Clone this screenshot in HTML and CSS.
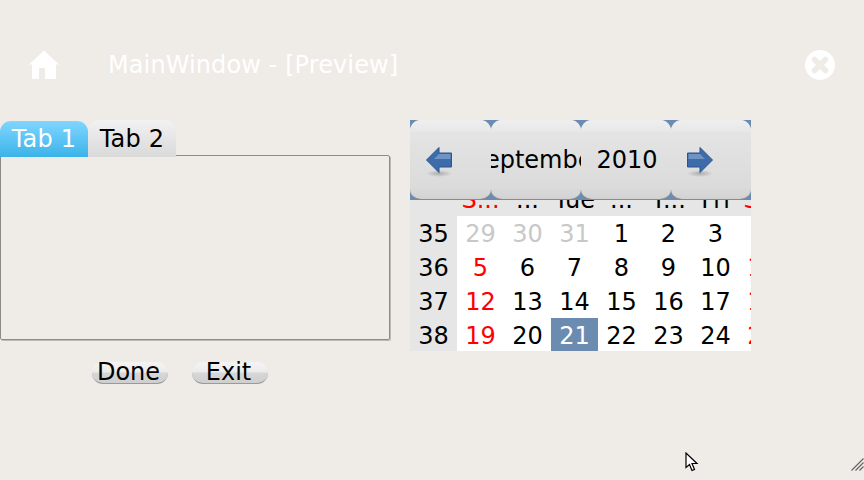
FILE: index.html
```html
<!DOCTYPE html>
<html lang="en">
<head>
  <meta charset="UTF-8" />
  <title>MainWindow - [Preview]</title>
  <link rel="stylesheet" href="styles.css">
</head>
<body>

<!-- TITLE BAR -->
<header class="titlebar">
  <svg class="home-icon" width="32" height="30" viewBox="0 0 32 30">
    <path d="M16 0.500 L31 14.500 H28 V29 H17 V18 H11 V29 H4 V14.500 H1 Z" fill="#fff"/>
  </svg>
  <div class="title">MainWindow - [Preview]</div>
  <svg class="close-icon" width="30" height="30" viewBox="0 0 30 30">
    <circle cx="15" cy="15" r="15" fill="#fff"/>
    <path d="M9.500 9.500 L20.500 20.500 M20.500 9.500 L9.500 20.500" stroke="#efebe7" stroke-width="5.500" stroke-linecap="round"/>
  </svg>
</header>

<main class="content">
  <!-- TABS -->
  <section class="left-panel">
    <div class="tabs">
      <div class="tab tab-active">Tab 1</div>
      <div class="tab">Tab 2</div>
    </div>
    <div class="tab-pane"></div>
    <div class="actions">
      <button class="pill">Done</button>
      <button class="pill">Exit</button>
    </div>
  </section>

  <!-- CALENDAR -->
  <section class="calendar">
    <div class="cal-nav">
      <div class="nav-btn nav-prev">
        <svg width="28" height="32" viewBox="0 0 28 32">
          <defs>
            <radialGradient id="arrow-shadow">
              <stop offset="0" stop-color="#000" stop-opacity="0.22"/>
              <stop offset="1" stop-color="#000" stop-opacity="0"/>
            </radialGradient>
          </defs>
          <ellipse cx="14" cy="27.500" rx="13" ry="3.500" fill="url(#arrow-shadow)"/>
          <path d="M1.500 14 L14 1.500 V7 H26.500 V21 H14 V26.500 Z" fill="#3d6ca8" stroke="#2b5590"/>
          <path d="M14 8 H25.500 V13 H9 Z" fill="#6d94c4"/>
        </svg>
      </div>
      <div class="nav-btn nav-month"><span>September</span></div>
      <div class="nav-btn nav-year">2010</div>
      <div class="nav-btn nav-next">
        <svg width="28" height="32" viewBox="0 0 28 32">
          <ellipse cx="14" cy="27.500" rx="13" ry="3.500" fill="url(#arrow-shadow)"/>
          <path d="M26.500 14 L14 1.500 V7 H1.500 V21 H14 V26.500 Z" fill="#3d6ca8" stroke="#2b5590"/>
          <path d="M14 8 H2.500 V13 H19 Z" fill="#6d94c4"/>
        </svg>
      </div>
    </div>

    <div class="cal-names">
      <div></div>
      <div class="red">S...</div>
      <div>...</div>
      <div>Tue</div>
      <div>...</div>
      <div>T...</div>
      <div>Fri</div>
      <div class="red">S...</div>
    </div>

    <div class="cal-grid">
      <div class="wk">35</div><div class="dim">29</div><div class="dim">30</div><div class="dim">31</div><div>1</div><div>2</div><div>3</div><div class="red">4</div>
      <div class="wk">36</div><div class="red">5</div><div>6</div><div>7</div><div>8</div><div>9</div><div>10</div><div class="red">11</div>
      <div class="wk">37</div><div class="red">12</div><div>13</div><div>14</div><div>15</div><div>16</div><div>17</div><div class="red">18</div>
      <div class="wk">38</div><div class="red">19</div><div>20</div><div class="selected">21</div><div>22</div><div>23</div><div>24</div><div class="red">25</div>
    </div>
  </section>
</main>

<!-- mouse pointer and window grip -->
<svg class="pointer" width="14" height="20" viewBox="0 0 14 20">
  <path d="M1 1 V15.500 L4.500 12.500 L7 18.500 L9.500 17.500 L7 11.500 H12 Z" fill="#fff" stroke="#000" stroke-width="1.200"/>
</svg>
<svg class="grip" width="13" height="13" viewBox="0 0 13 13">
  <path d="M0.500 12.500 L12.500 0.500 M4.500 12.500 L12.500 4.500 M8.500 12.500 L12.500 8.500" stroke="#666" stroke-width="1.200"/>
</svg>

</body>
</html>
```

FILE: styles.css
```css
* {
  box-sizing: border-box;
  margin: 0;
  padding: 0;
}
html, body {
  height: 100%;
  overflow: hidden;
}
body {
  position: relative;
  background-color: #efebe7;
  color: #000;
  font-family: "DejaVu Sans", sans-serif;
  font-size: 24px;
}

/* TITLE BAR */
.titlebar {
  display: flex;
  align-items: center;
  height: 50px;
  margin-top: 40px;
  padding: 0 29px 0 28px;
  color: #fff;
}
.home-icon {
  flex: none;
}
.title {
  flex: 1;
  margin-left: 48px;
  letter-spacing: 0.1px;
  white-space: nowrap;
}
.close-icon {
  flex: none;
}

.content {
  display: flex;
  align-items: flex-start;
  gap: 19px;
  margin-top: 30px;
}

/* TABS */
.left-panel {
  width: 391px;
}
.tabs {
  display: flex;
  margin-bottom: -2px;
  position: relative;
}
.tab {
  width: 88px;
  height: 37px;
  line-height: 39px;
  text-align: center;
  letter-spacing: 0.2px;
  border-radius: 11px 11px 0 0;
  background: linear-gradient(#f2f2f2, #d9d9d9);
}
.tab-active {
  height: 36px;
  margin-top: 1px;
  line-height: 37px;
  color: #fff;
  background: linear-gradient(#80d6ff, #3bb3e9);
}
.tab-pane {
  width: 390px;
  height: 185px;
  border: 1px solid #8e8a86;
  border-radius: 2px;
  box-shadow: 1px 1px 0 #bdb9b5;
}
.actions {
  display: flex;
  gap: 24px;
  margin: 22px 0 0 92px;
}
.pill {
  width: 76px;
  height: 22px;
  padding: 0 3px 2px 0;
  border: none;
  border-bottom: 1px solid #9a9a9a;
  border-radius: 11px;
  background: linear-gradient(#f4f4f4 0, #ececec 45%, #d6d6d6 55%, #cfcfcf 100%);
  font-family: inherit;
  font-size: 24px;
  line-height: 18px;
  color: #000;
}

/* CALENDAR */
.calendar {
  width: 341px;
  overflow: hidden;
  background-color: #e6e6e6;
}
.cal-nav {
  display: grid;
  grid-template-columns: 81px 90px 90px 80px;
  height: 80px;
  background-color: #6b8cb0;
}
.nav-btn {
  display: flex;
  align-items: center;
  justify-content: center;
  overflow: hidden;
  border-radius: 11px;
  border-bottom: 1px solid #8a8a8a;
  background:
    linear-gradient(#efefef, #e7e7e7) top / 100% 12px no-repeat,
    linear-gradient(#dcdcdc, #d2d2d2) bottom / 100% 13px no-repeat,
    linear-gradient(#e6e6e6, #d9d9d9);
  white-space: nowrap;
}
.nav-prev,
.nav-next {
  justify-content: flex-start;
  padding: 4px 0 0 15px;
}
.nav-month span {
  flex: none;
}
.nav-year {
  padding-left: 2px;
}
.cal-names,
.cal-grid {
  display: grid;
  grid-template-columns: repeat(8, 47px);
  text-align: center;
}
.cal-names {
  height: 16px;
  overflow: hidden;
}
.cal-names div {
  display: flex;
  align-items: flex-end;
  justify-content: center;
  height: 16px;
  padding-bottom: 2px;
  line-height: 28px;
  white-space: nowrap;
}
.cal-grid {
  grid-template-rows: 34px 34px 34px 33px;
  background-color: #fff;
}
.cal-grid div {
  padding-top: 4px;
  line-height: 29px;
}
.wk {
  background-color: #e6e6e6;
}
.red {
  color: #f00;
}
.dim {
  color: #c8c8c8;
}
.cal-grid .selected {
  background-color: #6b8cb0;
  color: #fff;
}

/* POINTER / GRIP */
.pointer {
  position: absolute;
  left: 685px;
  top: 452px;
}
.grip {
  position: absolute;
  right: 0;
  top: 458px;
}
```
